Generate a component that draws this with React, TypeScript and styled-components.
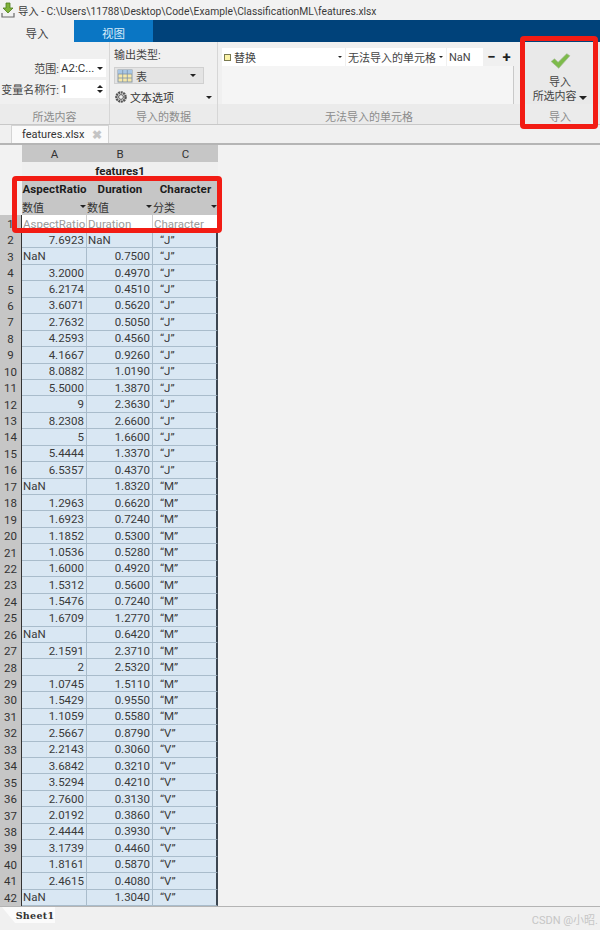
import React from "react";
import styled, { createGlobalStyle } from "styled-components";

const Global = createGlobalStyle`
  html, body { margin: 0; padding: 0; background: #f0f0f0; }
  body { font-family: Roboto, "Noto Sans CJK SC", sans-serif; color: #333; }
  * { box-sizing: border-box; }
`;

const Page = styled.div`
  position: relative;
  width: 600px;
  height: 930px;
  overflow: hidden;
  display: flex;
  flex-direction: column;
  background: #f0f0f0;
`;

const TitleBar = styled.div`
  height: 20px;
  display: flex;
  align-items: center;
  gap: 3px;
  padding-left: 1px;
  font-size: 10.3px;
  color: #3a3a3a;
  background: #f2f2f2;
  white-space: nowrap;
`;

const TabBar = styled.div`
  height: 22px;
  display: flex;
  background: #00427a;
`;

const Tab = styled.div<{ $active?: boolean }>`
  width: ${(p) => (p.$active ? 74 : 79)}px;
  display: flex;
  align-items: center;
  justify-content: center;
  padding-top: 3px;
  font-size: 11.5px;
  color: ${(p) => (p.$active ? "#444" : "#d8ecfa")};
  background: ${(p) => (p.$active ? "#f0f0f0" : "#0a76c4")};
`;

const Ribbon = styled.div`
  height: 83px;
  flex: none;
  display: flex;
  background: #f0f0f0;
  border-bottom: 1px solid #c8c8c8;
`;

const Section = styled.div<{ $w: number; $divider?: boolean }>`
  width: ${(p) => p.$w}px;
  flex: none;
  display: flex;
  flex-direction: column;
  border-right: ${(p) => (p.$divider ? "1px solid #d6d6d6" : "none")};
`;

const SectionBody = styled.div`
  flex: 1;
  min-height: 0;
  display: flex;
  flex-direction: column;
`;

const SectionLabel = styled.div`
  height: 20px;
  flex: none;
  display: flex;
  align-items: center;
  justify-content: center;
  padding-top: 3px;
  font-size: 11px;
  color: #8c8c8c;
  background: #ebebeb;
`;

const SelectionBody = styled(SectionBody)`
  padding: 17px 3px 0 0;
  gap: 3px;
  align-items: flex-end;
`;

const Field = styled.div`
  display: flex;
  align-items: center;
  height: 18px;
  font-size: 11px;
  color: #444;
  gap: 1px;
  white-space: nowrap;
`;

const InputBox = styled.div`
  width: 46px;
  height: 18px;
  display: flex;
  align-items: center;
  justify-content: space-between;
  padding: 0 3px 0 1px;
  background: #fff;
  font-size: 11.5px;
  color: #333;
`;

const Caret = styled.span<{ $size?: number }>`
  display: inline-block;
  flex: none;
  width: 0;
  height: 0;
  border-left: ${(p) => p.$size ?? 3.5}px solid transparent;
  border-right: ${(p) => p.$size ?? 3.5}px solid transparent;
  border-top: ${(p) => p.$size ?? 3.5}px solid #222;
`;

const Spinner = styled.div`
  display: flex;
  flex-direction: column;
  justify-content: center;
  gap: 2px;
`;

const SpinUp = styled.span`
  width: 0;
  height: 0;
  border-left: 3px solid transparent;
  border-right: 3px solid transparent;
  border-bottom: 3px solid #222;
`;

const DataBody = styled(SectionBody)`
  padding: 6px 0 0 4px;
  font-size: 11px;
  color: #444;
`;

const OutputLabel = styled.div`
  height: 20px;
  line-height: 16px;
`;

const TypeSelect = styled.div`
  width: 90px;
  height: 17px;
  display: flex;
  align-items: center;
  gap: 3px;
  padding: 0 7px 0 2px;
  background: #e4e4e4;
  border: 1px solid #d0d0d0;
`;

const Spacer = styled.div`
  flex: 1;
`;

const OptionRow = styled.div`
  height: 14px;
  margin-top: 6px;
  width: 98px;
  display: flex;
  align-items: center;
  gap: 2px;
  color: #333;
`;

const PanelBody = styled(SectionBody)`
  padding: 6px 0 0 4px;
`;

const RuleRow = styled.div`
  width: 292px;
  height: 18px;
  display: flex;
  align-items: stretch;
  font-size: 11px;
  color: #444;
  background: #fff;
`;

const RuleCell = styled.div<{ $w: number }>`
  width: ${(p) => p.$w}px;
  flex: none;
  display: flex;
  align-items: center;
  justify-content: space-between;
  padding: 0 3px 0 2px;
  border-right: 1px solid #f0f0f0;
  white-space: nowrap;
`;

const RuleTag = styled.span`
  display: flex;
  align-items: center;
  gap: 3px;
`;

const Swatch = styled.span`
  width: 7px;
  height: 7px;
  background: #fbf3a8;
  border: 1px solid #7a7a50;
`;

const RuleButtons = styled.div`
  flex: 1;
  display: flex;
  align-items: center;
  justify-content: space-around;
  background: #f0f0f0;
  font-size: 15px;
  font-weight: 700;
  color: #222;
`;

const PanelFill = styled.div`
  width: 292px;
  flex: 1;
  background: #f5f5f5;
  border-right: 1px solid #c9c9c9;
`;

const ImportBody = styled(SectionBody)`
  align-items: center;
  padding-top: 11px;
  font-size: 11px;
  color: #444;
  background: #e9e9e9;
`;

const ImportText = styled.div`
  text-align: center;
  line-height: 14px;
  margin-top: 7px;
  white-space: nowrap;
`;

const DocStrip = styled.div`
  height: 20px;
  display: flex;
  padding-left: 11px;
  background: #f0f0f0;
  border-bottom: 2px solid #b5b5b5;
  flex: none;
`;

const DocTab = styled.div`
  width: 98px;
  height: 18px;
  display: flex;
  align-items: center;
  justify-content: space-between;
  padding: 0 6px 0 10px;
  font-size: 11px;
  color: #333;
  background: #fafafa;
  border: 1px solid #d4d4d4;
  border-bottom: none;
`;

const CloseMark = styled.span`
  font-size: 12px;
  font-weight: 700;
  color: #c4c4c4;
`;

const Sheet = styled.div`
  height: 761px;
  flex: none;
  overflow: hidden;
  background: #f2f2f2;
`;

const SheetGrid = styled.div`
  display: grid;
  width: 218px;
  grid-template-columns: 22px 65px 66px 65px;
  grid-template-rows: 17px 18px 18px 17px 17px repeat(41, 16.45px);
  font-size: 11.5px;
  color: #333;
`;

const Corner = styled.div`
  background: #f2f2f2;
`;

const ColHead = styled.div`
  display: flex;
  align-items: center;
  justify-content: center;
  background: #c6c6c6;
  color: #333;
  font-size: 11.5px;
`;

const Title = styled.div`
  grid-column: 2 / 5;
  display: flex;
  align-items: center;
  justify-content: center;
  font-weight: 700;
  font-size: 11.5px;
  color: #222;
  background: #efefef;
`;

const RowHead = styled.div<{ $grey?: boolean }>`
  display: flex;
  align-items: center;
  justify-content: center;
  color: #333;
  background: ${(p) => (p.$grey ? "#f2f2f2" : "#c6c6c6")};
  border-right: ${(p) => (p.$grey ? "none" : "1px solid #333")};
`;

const VarName = styled.div`
  display: flex;
  align-items: center;
  justify-content: center;
  font-weight: 700;
  font-size: 11.5px;
  letter-spacing: 0.1px;
  color: #1c1c1c;
  background: #c6c6c6;
  white-space: nowrap;
`;

const TypeCell = styled.div`
  display: flex;
  align-items: center;
  justify-content: space-between;
  padding: 0 1px 0 0;
  font-size: 11px;
  color: #333;
  background: #c6c6c6;
`;

const OrigName = styled.div`
  display: flex;
  align-items: center;
  padding-left: 1px;
  font-size: 11.5px;
  color: #9a9a9a;
  background: #fff;
  border-right: 1px solid #cfcfcf;
  white-space: nowrap;
  overflow: hidden;
`;

const Cell = styled.div<{ $align: "left" | "right" | "cat"; $last?: boolean }>`
  display: flex;
  align-items: center;
  justify-content: ${(p) => (p.$align === "right" ? "flex-end" : "flex-start")};
  padding: ${(p) =>
    p.$align === "right" ? "0 2px 0 0" : p.$align === "cat" ? "0 0 0 7px" : "0 0 0 1px"};
  color: #3a3a3a;
  background: #d9e7f3;
  border-bottom: 1px solid #a9bccb;
  border-right: ${(p) => (p.$last ? "2px solid #3c4650" : "1px solid #a9bccb")};
`;

const SheetTabs = styled.div`
  height: 24px;
  flex: none;
  display: flex;
  padding-left: 2px;
  background: #f0f0f0;
  border-top: 1px solid #b4b4b4;
`;

const SheetTab = styled.div`
  width: 53px;
  height: 16px;
  display: flex;
  align-items: center;
  justify-content: center;
  padding-left: 13px;
  font-family: "DejaVu Serif", "Liberation Serif", serif;
  font-weight: 700;
  font-size: 9.5px;
  letter-spacing: 0.3px;
  color: #333;
  background: #fbfbfb;
  clip-path: polygon(0 0, 100% 0, 100% 100%, 13px 100%);
`;

const RedBox = styled.div<{ $x: number; $y: number; $w: number; $h: number }>`
  position: absolute;
  left: ${(p) => p.$x}px;
  top: ${(p) => p.$y}px;
  width: ${(p) => p.$w}px;
  height: ${(p) => p.$h}px;
  border: 5px solid #f21c14;
  border-radius: 4px;
  pointer-events: none;
`;

const Watermark = styled.div`
  position: absolute;
  right: 2px;
  bottom: 3px;
  font-size: 11px;
  color: #c6c6c6;
`;

type Row = [number, string, string, string];

const J = "“J”";
const M = "“M”";
const V = "“V”";

const rows: Row[] = [
  [2, "7.6923", "NaN", J],
  [3, "NaN", "0.7500", J],
  [4, "3.2000", "0.4970", J],
  [5, "6.2174", "0.4510", J],
  [6, "3.6071", "0.5620", J],
  [7, "2.7632", "0.5050", J],
  [8, "4.2593", "0.4560", J],
  [9, "4.1667", "0.9260", J],
  [10, "8.0882", "1.0190", J],
  [11, "5.5000", "1.3870", J],
  [12, "9", "2.3630", J],
  [13, "8.2308", "2.6600", J],
  [14, "5", "1.6600", J],
  [15, "5.4444", "1.3370", J],
  [16, "6.5357", "0.4370", J],
  [17, "NaN", "1.8320", M],
  [18, "1.2963", "0.6620", M],
  [19, "1.6923", "0.7240", M],
  [20, "1.1852", "0.5300", M],
  [21, "1.0536", "0.5280", M],
  [22, "1.6000", "0.4920", M],
  [23, "1.5312", "0.5600", M],
  [24, "1.5476", "0.7240", M],
  [25, "1.6709", "1.2770", M],
  [26, "NaN", "0.6420", M],
  [27, "2.1591", "2.3710", M],
  [28, "2", "2.5320", M],
  [29, "1.0745", "1.5110", M],
  [30, "1.5429", "0.9550", M],
  [31, "1.1059", "0.5580", M],
  [32, "2.5667", "0.8790", V],
  [33, "2.2143", "0.3060", V],
  [34, "3.6842", "0.3210", V],
  [35, "3.5294", "0.4210", V],
  [36, "2.7600", "0.3130", V],
  [37, "2.0192", "0.3860", V],
  [38, "2.4444", "0.3930", V],
  [39, "3.1739", "0.4460", V],
  [40, "1.8161", "0.5870", V],
  [41, "2.4615", "0.4080", V],
  [42, "NaN", "1.3040", V],
];

const variables = [
  { name: "AspectRatio", type: "数值" },
  { name: "Duration", type: "数值" },
  { name: "Character", type: "分类" },
];

const ImportGlyph = () => (
  <svg width="14" height="16" viewBox="0 0 14 16">
    <path d="M5 1h4v5h3L7 11 2 6h3z" fill="#7fb23a" stroke="#4f7d1e" strokeWidth="0.8" />
    <path d="M1 11v4h12v-4" fill="none" stroke="#6a6a6a" strokeWidth="1.2" />
  </svg>
);

const TableGlyph = () => (
  <svg width="16" height="14" viewBox="0 0 16 14">
    <rect x="1" y="1" width="14" height="12" fill="#f6e7a8" stroke="#8a9aa8" />
    <rect x="1" y="1" width="14" height="4" fill="#a8c6e4" />
    <path d="M1 5h14M1 9h14M5.7 1v12M10.3 1v12" stroke="#7d93a8" strokeWidth="0.8" />
  </svg>
);

const GearGlyph = () => (
  <svg width="14" height="14" viewBox="0 0 14 14">
    <circle cx="7" cy="7" r="4.6" fill="none" stroke="#555" strokeWidth="2.4" strokeDasharray="2 0.6" />
    <circle cx="7" cy="7" r="2.4" fill="#f0f0f0" stroke="#555" strokeWidth="1" />
  </svg>
);

const CheckGlyph = () => (
  <svg width="23" height="18" viewBox="0 0 23 18">
    <path
      d="M1 9.5L4.8 6.5L8.8 10.5L18.5 0.8L22 3.2L9.5 17.2Z"
      fill="#7dbb4a"
      stroke="#a3b896"
      strokeWidth="0.8"
    />
  </svg>
);

export default function App() {
  return (
    <Page>
      <Global />
      <TitleBar>
        <ImportGlyph />
        <span>导入 - C:\Users\11788\Desktop\Code\Example\ClassificationML\features.xlsx</span>
      </TitleBar>
      <TabBar>
        <Tab $active>导入</Tab>
        <Tab>视图</Tab>
      </TabBar>
      <Ribbon>
        <Section $w={110} $divider>
          <SelectionBody>
            <Field>
              范围:
              <InputBox>
                A2:C...
                <Caret />
              </InputBox>
            </Field>
            <Field>
              变量名称行:
              <InputBox>
                1
                <Spinner>
                  <SpinUp />
                  <Caret $size={3} />
                </Spinner>
              </InputBox>
            </Field>
          </SelectionBody>
          <SectionLabel>所选内容</SectionLabel>
        </Section>
        <Section $w={108} $divider>
          <DataBody>
            <OutputLabel>输出类型:</OutputLabel>
            <TypeSelect>
              <TableGlyph />
              表
              <Spacer />
              <Caret />
            </TypeSelect>
            <OptionRow>
              <GearGlyph />
              文本选项
              <Spacer />
              <Caret />
            </OptionRow>
          </DataBody>
          <SectionLabel>导入的数据</SectionLabel>
        </Section>
        <Section $w={302}>
          <PanelBody>
            <RuleRow>
              <RuleCell $w={124}>
                <RuleTag>
                  <Swatch />
                  替换
                </RuleTag>
                <Caret $size={2.5} />
              </RuleCell>
              <RuleCell $w={101}>
                无法导入的单元格
                <Caret $size={2.5} />
              </RuleCell>
              <RuleCell $w={37}>NaN</RuleCell>
              <RuleButtons>
                <span>−</span>
                <span>+</span>
              </RuleButtons>
            </RuleRow>
            <PanelFill />
          </PanelBody>
          <SectionLabel>无法导入的单元格</SectionLabel>
        </Section>
        <Section $w={80}>
          <ImportBody>
            <CheckGlyph />
            <ImportText>
              导入
              <br />
              所选内容 <Caret $size={4} />
            </ImportText>
          </ImportBody>
          <SectionLabel>导入</SectionLabel>
        </Section>
      </Ribbon>
      <DocStrip>
        <DocTab>
          features.xlsx
          <CloseMark>✖</CloseMark>
        </DocTab>
      </DocStrip>
      <Sheet>
        <SheetGrid>
          <Corner />
          <ColHead>A</ColHead>
          <ColHead>B</ColHead>
          <ColHead>C</ColHead>

          <RowHead $grey />
          <Title>features1</Title>

          <RowHead $grey />
          {variables.map((v) => (
            <VarName key={v.name}>{v.name}</VarName>
          ))}

          <RowHead $grey />
          {variables.map((v) => (
            <TypeCell key={v.name}>
              {v.type}
              <Caret />
            </TypeCell>
          ))}

          <RowHead>1</RowHead>
          {variables.map((v) => (
            <OrigName key={v.name}>{v.name}</OrigName>
          ))}

          {rows.map(([n, a, b, c]) => (
            <React.Fragment key={n}>
              <RowHead>{n}</RowHead>
              <Cell $align={a === "NaN" ? "left" : "right"}>{a}</Cell>
              <Cell $align={b === "NaN" ? "left" : "right"}>{b}</Cell>
              <Cell $align="cat" $last>
                {c}
              </Cell>
            </React.Fragment>
          ))}
        </SheetGrid>
      </Sheet>
      <SheetTabs>
        <SheetTab>Sheet1</SheetTab>
      </SheetTabs>
      <RedBox $x={12} $y={176} $w={210} $h={57} />
      <RedBox $x={520} $y={36} $w={78} $h={93} />
      <Watermark>CSDN @小昭.</Watermark>
    </Page>
  );
}
